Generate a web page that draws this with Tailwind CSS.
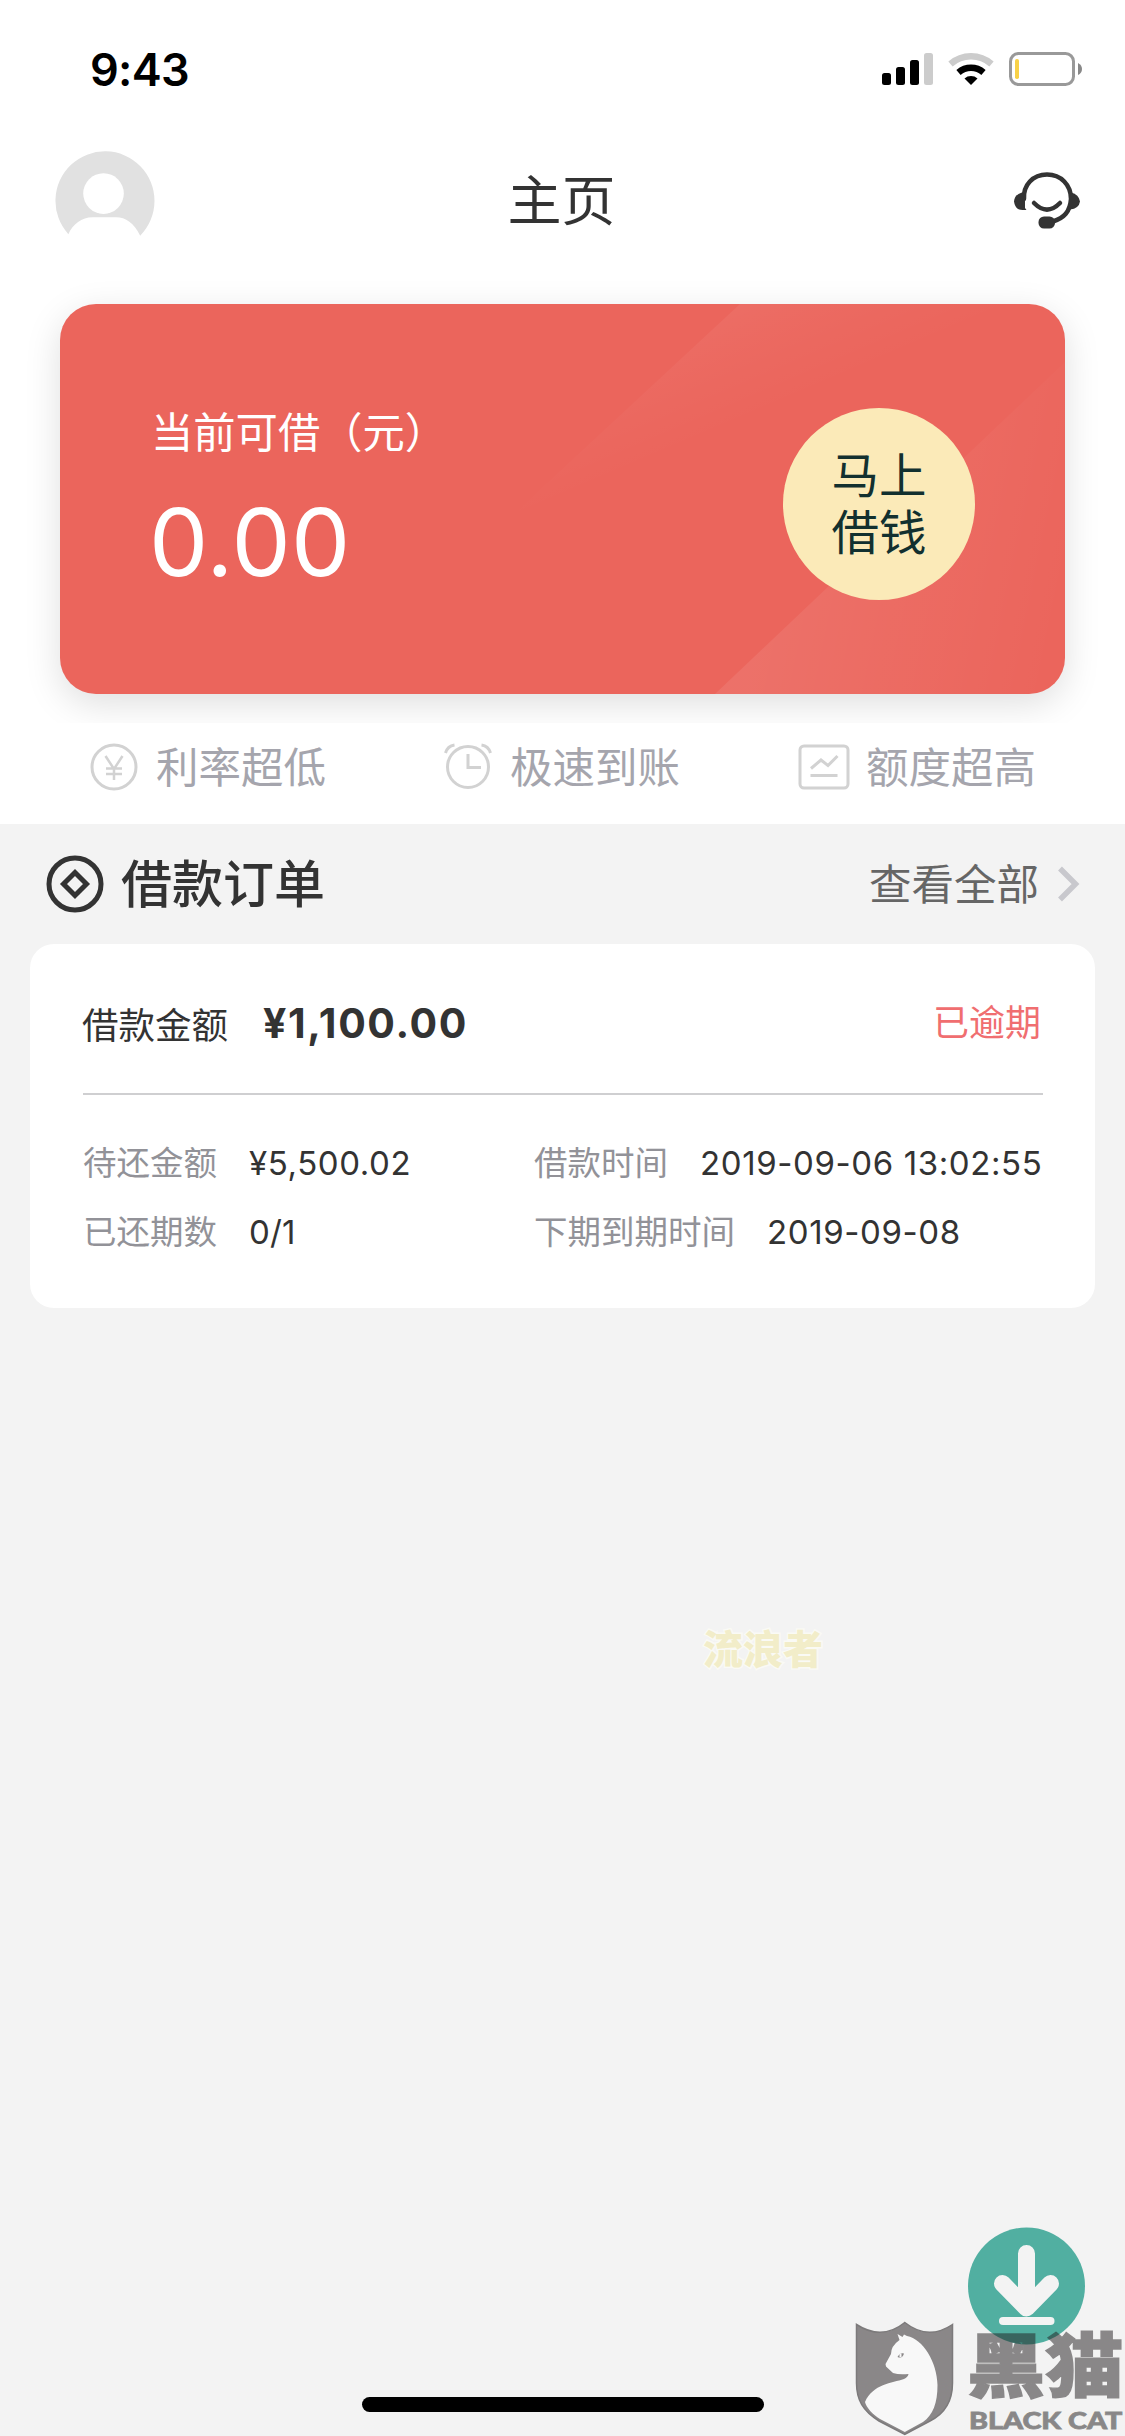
<!DOCTYPE html>
<html lang="zh-CN">
<head>
<meta charset="utf-8">
<title>主页</title>
<script src="https://cdn.jsdelivr.net/npm/@tailwindcss/browser@4"></script>
</head>
<body class="bg-[#f3f3f3]">
<div class="relative flex h-[2436px] w-[1125px] flex-col overflow-hidden bg-[#f3f3f3] font-['Inter','Noto_Sans_CJK_SC',sans-serif] text-[#333]">

  <div class="flex h-[824px] flex-col bg-white">
    <!-- Status bar -->
    <div class="flex h-[138px] items-center justify-between pr-[42px] pl-[90px]">
      <span class="text-[45px] leading-none font-semibold tracking-[-0.7px] text-black">9:43</span>
      <svg class="h-[36px] w-[202px]" viewBox="0 0 202 36">
        <g fill="#000">
          <rect x="1" y="22" width="9" height="12" rx="2.5"/>
          <rect x="15" y="16" width="9" height="18" rx="2.5"/>
          <rect x="29" y="9" width="9" height="25" rx="2.5"/>
          <rect x="43" y="2" width="9" height="32" rx="2.5" fill="#ccc"/>
        </g>
        <g fill="none" stroke-width="6.5">
          <path d="M69.500 13a31 31 0 0 1 41 0" stroke="#ccc"/>
          <path d="M77.500 21.500a19 19 0 0 1 25 0" stroke="#000"/>
        </g>
        <path d="M83.500 27.500a10 10 0 0 1 13 0L90 34z" fill="#000"/>
        <rect x="129.500" y="2.500" width="63" height="31" rx="8" fill="none" stroke="#999" stroke-width="3"/>
        <rect x="134" y="8" width="4" height="20" rx="1.800" fill="#f8d147"/>
        <path d="M197 12q4 2 4 6t-4 6z" fill="#888"/>
      </svg>
    </div>

    <!-- Navigation -->
    <div class="grid h-[126px] grid-cols-3 items-center pr-[44px] pl-[55px]">
      <svg class="h-[101px] w-[101px]" viewBox="0 0 102 102">
        <path d="M13.500 84A50 50 0 1 1 86 85.500C80 73 71 67 62 67H38C27 67 18 74 13.500 84z" fill="#e1e1e1"/>
        <circle cx="49" cy="43" r="20.500" fill="#fff"/>
      </svg>
      <h1 class="-ml-[13px] pt-px text-center text-[54px] leading-[60px] font-normal">主页</h1>
      <svg class="h-[58px] w-[68px] justify-self-end" viewBox="0 0 68 58">
        <g fill="none" stroke="#333" stroke-linecap="round" stroke-width="4.500">
          <path d="M11 27C10 13 20 2.500 34 2.500S58 13 58 27C57 40 51 46 40 49.500"/>
          <path d="M21 31q13 13 26 0"/>
        </g>
        <path d="M12 21.500v16q-9.500 2-11-8 .500-7 8-9z" fill="#333"/>
        <path d="M9 27q0 6 4.500 11h-5z" fill="#333"/>
        <path d="M57 21.500v16q9-1 10-8-1-7-9-9z" fill="#333"/>
        <rect x="25.500" y="44.500" width="16.500" height="12" rx="5.500" fill="#333"/>
      </svg>
    </div>

    <!-- Credit card -->
    <div class="h-[459px] overflow-hidden px-[60px] pt-[40px]">
      <div class="relative flex h-[390px] items-center justify-between overflow-visible rounded-[36px] bg-[#eb655c] pr-[90px] pl-[91px] shadow-[0_10px_36px_rgba(0,0,0,0.13)]">
        <svg class="absolute inset-0 h-full w-full rounded-[36px]" viewBox="0 0 1005 390" preserveAspectRatio="none">
          <defs>
            <linearGradient id="beam" gradientUnits="userSpaceOnUse" x1="620" y1="-20" x2="680" y2="120">
              <stop offset="0" stop-color="#fff" stop-opacity=".08"/><stop offset=".55" stop-color="#fff" stop-opacity=".03"/><stop offset="1" stop-color="#fff" stop-opacity="0"/>
            </linearGradient>
            <linearGradient id="glow" gradientUnits="userSpaceOnUse" x1="700" y1="310" x2="990" y2="370">
              <stop offset="0" stop-color="#fff" stop-opacity=".08"/><stop offset="1" stop-color="#fff" stop-opacity="0"/>
            </linearGradient>
          </defs>
          <path d="M680 0H1005V390H260z" fill="url(#beam)"/>
          <path d="M1005 58V390H655z" fill="url(#glow)"/>
        </svg>
        <div class="relative flex flex-col gap-[44px] pb-[8px] text-white">
          <span class="text-[42.3px] leading-[50px]">当前可借（元）</span>
          <span class="-ml-[2px] text-[94px] leading-[80px] tracking-[0.4px]">0.00</span>
        </div>
        <button class="relative mt-[10px] flex h-[192px] w-[192px] items-center justify-center rounded-full bg-[#fbeab8] text-[47.5px] leading-[57px] text-[#12302f]">马上<br>借钱</button>
      </div>
    </div>

    <!-- Features -->
    <div class="flex h-[88px] items-center justify-between pr-[89px] pl-[90px] text-[42.5px] leading-none text-[#a5a5ad]">
      <div class="flex items-center gap-[18px]">
        <svg class="h-[48px] w-[48px]" viewBox="0 0 48 48" fill="none" stroke="#d2d2d2" stroke-width="3">
          <circle cx="24" cy="24" r="22"/><path d="M15.500 13l8.500 13 8.500-13M24 26v11M16 25.500h16M16 31h16" stroke-width="2.500"/>
        </svg>
        <span class="pt-[2px]">利率超低</span>
      </div>
      <div class="flex items-center gap-[18px]">
        <svg class="h-[48px] w-[48px]" viewBox="0 0 48 48" fill="none" stroke="#d2d2d2" stroke-width="3">
          <circle cx="24" cy="24" r="20.500"/><path d="M24 11v13.500h13"/><path d="M1.500 10q2-7 9-8M46.500 10q-2-7-9-8"/>
        </svg>
        <span class="pt-[2px]">极速到账</span>
      </div>
      <div class="flex items-center gap-[16px]">
        <svg class="h-[48px] w-[52px]" viewBox="0 0 52 48" fill="none" stroke="#d2d2d2" stroke-width="3">
          <rect x="2" y="3" width="48" height="42" rx="4"/><path d="M13 25.500l10-8.500 7 5.500L39.500 13M12.500 32.500h27"/>
        </svg>
        <span class="pt-[2px]">额度超高</span>
      </div>
    </div>
  </div>

  <!-- Orders header -->
  <div class="flex h-[120px] items-center justify-between pr-[44px] pl-[46px]">
    <div class="flex items-center gap-[17px]">
      <svg class="h-[58px] w-[58px]" viewBox="0 0 58 58" fill="none" stroke="#333" stroke-width="5">
        <circle cx="29" cy="29" r="26"/><path d="M29 17.500L40.500 29 29 40.500 17.500 29z"/>
      </svg>
      <h2 class="pt-px text-[51px] leading-none font-medium">借款订单</h2>
    </div>
    <div class="flex items-center gap-[18px]">
      <span class="pt-[2px] text-[42.5px] leading-none text-[#666]">查看全部</span>
      <svg class="h-[38px] w-[24px]" viewBox="0 0 24 38" fill="none" stroke="#c8c8cd" stroke-width="5.500">
        <path d="M3 3.500L18.500 19 3 34.500"/>
      </svg>
    </div>
  </div>

  <!-- Order -->
  <div class="mx-[30px] flex h-[364px] flex-col rounded-[24px] bg-white pr-[52px] pl-[53px]">
    <div class="flex h-[151px] items-center justify-between border-b-2 border-[#cfcfd1]">
      <div class="flex items-center gap-[35px]">
        <span class="-ml-px pt-[15px] text-[36.500px] leading-none">借款金额</span>
        <span class="pt-[9px] text-[41px] leading-none font-bold tracking-[1.6px]">¥1,100.00</span>
      </div>
      <span class="pt-[8px] pr-[2px] text-[36px] leading-none text-[#f06e70]">已逾期</span>
    </div>
    <div class="grid grid-cols-[451px_1fr] gap-y-[19px] pt-[43px] text-[33px] leading-[50px] whitespace-nowrap">
      <div class="flex gap-[32px]"><span class="text-[33.500px] text-[#929298]">待还金额</span><span class="tracking-[0.6px]">¥5,500.02</span></div>
      <div class="flex gap-[32px]"><span class="text-[33.500px] text-[#929298]">借款时间</span><span class="tracking-[0.6px]">2019-09-06 13:02:55</span></div>
      <div class="flex gap-[32px]"><span class="text-[33.500px] text-[#929298]">已还期数</span><span class="tracking-[0.1px]">0/1</span></div>
      <div class="flex gap-[32px]"><span class="text-[33.500px] text-[#929298]">下期到期时间</span><span class="tracking-[0.6px]">2019-09-08</span></div>
    </div>
  </div>

  <!-- User watermark -->
  <span class="absolute top-[1629px] left-[703px] text-[40px] leading-[42px] font-black text-[#f2edc9] [-webkit-text-stroke:3px_#fafaf5] [paint-order:stroke_fill]">流浪者</span>

  <!-- Home indicator -->
  <div class="absolute bottom-[24px] left-[362px] h-[15px] w-[402px] rounded-full bg-black"></div>

  <!-- Floating download button -->
  <svg class="absolute top-[2227px] left-[967px] h-[118px] w-[118px]" viewBox="0 0 118 118">
    <circle cx="59.500" cy="59" r="58.500" fill="#51afa1"/>
    <path d="M59.500 26.500V79M35.500 56.500l24 24.500 24-24.500" fill="none" stroke="#f3f3f3" stroke-width="17" stroke-linecap="round" stroke-linejoin="round"/>
    <rect x="32" y="90" width="55.500" height="8" rx="4" fill="#f3f3f3"/>
  </svg>

  <!-- Black Cat shield -->
  <svg class="absolute top-[2320px] left-[855px] h-[116px] w-[99px]" viewBox="0 0 99 116">
    <path d="M1.500 4.500Q27 21 49.800 2.500Q73 21 97.500 4.500V63C97.500 82 89 94 75 101L49.800 114.500L24 101C8 91 1.500 80 1.500 63z" fill="#8a8788" stroke="#7c7a7b" stroke-width="1.500"/>
    <path d="M42.500 14L47.500 17 49 14.500 52 16C68 19 82 42 82.500 65C82.500 83 78 95 68 102L49.800 112L25 99C18 95 11 87 10 82C18 64 37 63 49 59Q53 57 53.500 54Q44 55 38 53L31 46.500 30.500 44 36 34Q36 26 44.500 20z" fill="#f8f8f8"/>
    <path d="M42.500 37Q45 32 49 33.500Q47.500 39 42.500 37z" fill="#8a8788"/>
    <path d="M45.500 33.500v3.500" stroke="#f8f8f8" stroke-width="2"/>
  </svg>
  <div class="absolute top-[2328px] left-[967px] flex flex-col text-[#221e20] opacity-50">
    <span class="origin-left scale-x-[1.03] scale-y-[0.92] text-[76px] leading-[76px] font-black whitespace-nowrap [-webkit-text-stroke:1.5px_#221e20]">黑猫</span>
    <span class="mt-[4px] ml-[2px] origin-left scale-x-[1.22] font-['Lato'] text-[23.500px] leading-[24px] font-black whitespace-nowrap [-webkit-text-stroke:0.8px_#221e20]">BLACK CAT</span>
  </div>
</div>
</body>
</html>
